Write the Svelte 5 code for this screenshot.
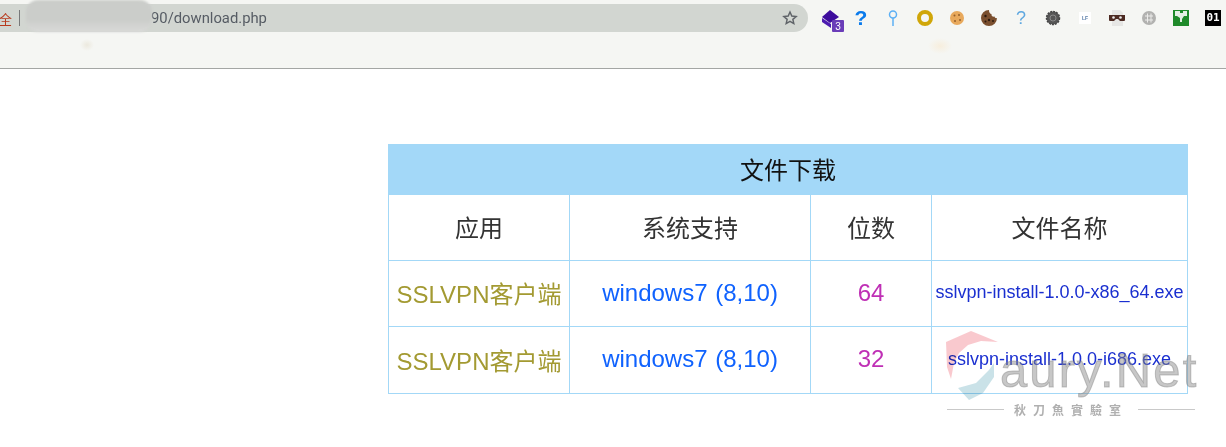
<script>
  const extensions = ["stack", "help", "pin", "ring", "cookie", "choc", "help2", "gear", "lf", "mask", "badge", "puzzle", "bin"];
  const rows = [
    { bits: "64", file: "sslvpn-install-1.0.0-x86_64.exe" },
    { bits: "32", file: "sslvpn-install-1.0.0-i686.exe" }
  ];
</script>

<div class="toolbar">
  <div class="pill">
    <span class="secure">全</span>
    <span class="sep"></span>
    <span class="url">90/download.php</span>
    <svg class="star" width="16" height="16" viewBox="0 0 24 24" fill="none" stroke="#5f6368" stroke-width="2.2">
      <path d="M12 3l2.7 6 6.5.7-4.9 4.3 1.4 6.4L12 17.1l-5.700 3.300 1.400-6.400L2.800 9.700l6.500-.7z" />
    </svg>
  </div>

  <div class="icons">
    {#each extensions as name}
      <span class="ext">
        {#if name === "stack"}
          <svg width="32" height="32" viewBox="0 0 32 32">
            <path d="M17 8l9 7-9 6-8-6z" fill="#3d0c9c" />
            <path d="M9 16l9 6v4l-9-6z" fill="#4c1cb0" />
            <rect x="19" y="18" width="12" height="12" rx="1" fill="#6a3db8" />
            <text x="25" y="28" class="badge-num">3</text>
          </svg>
        {:else if name === "help"}
          <span class="q">?</span>
        {:else if name === "pin"}
          <svg width="12" height="18" viewBox="0 0 12 18" fill="none" stroke="#5cb0f5" stroke-width="1.500">
            <circle cx="6" cy="5.500" r="3.500" />
            <path d="M6 9v8" />
          </svg>
        {:else if name === "ring"}
          <svg width="18" height="18" viewBox="0 0 18 18" fill="none">
            <circle cx="9" cy="9" r="6" stroke="#d0a608" stroke-width="4" />
          </svg>
        {:else if name === "cookie"}
          <svg width="16" height="16" viewBox="0 0 16 16">
            <circle cx="8" cy="8" r="7" fill="#e8a95c" />
            <circle cx="5.500" cy="5.500" r="1" fill="#96602a" />
            <circle cx="10" cy="5" r="1" fill="#96602a" />
            <circle cx="11" cy="10" r="1" fill="#96602a" />
            <circle cx="6" cy="11" r="1" fill="#96602a" />
          </svg>
        {:else if name === "choc"}
          <svg width="18" height="18" viewBox="0 0 18 18">
            <path d="M9 1a8 8 0 1 0 8 8c-1.500.5-2.500-.5-2.500-1.500C13 8 11 7 11.500 5 10 5 8.800 3 9 1z" fill="#7a4f2e" />
            <circle cx="5.500" cy="7" r="1.200" fill="#2e1a0e" />
            <circle cx="9" cy="11" r="1.200" fill="#2e1a0e" />
            <circle cx="5.500" cy="12.500" r="1" fill="#2e1a0e" />
            <circle cx="13" cy="12" r="1" fill="#2e1a0e" />
          </svg>
        {:else if name === "help2"}
          <span class="q light">?</span>
        {:else if name === "gear"}
          <svg width="16" height="16" viewBox="0 0 16 16">
            <circle cx="8" cy="8" r="6.500" fill="#565656" stroke="#444" stroke-width="1.500" stroke-dasharray="2 1" />
            <circle cx="8" cy="8" r="3" fill="none" stroke="#8a8a8a" />
          </svg>
        {:else if name === "lf"}
          <span class="lf">LF</span>
        {:else if name === "mask"}
          <svg width="18" height="18" viewBox="0 0 18 18">
            <path d="M4 1h8l3 3v13H4z" fill="#e6e6e4" />
            <path d="M1 6h16v5a1 1 0 0 1-1 1h-4l-2-2H8l-2 2H2a1 1 0 0 1-1-1z" fill="#4c2a22" />
            <circle cx="5.500" cy="8.500" r="1.300" fill="#eee" />
            <circle cx="12.500" cy="8.500" r="1.300" fill="#eee" />
          </svg>
        {:else if name === "badge"}
          <svg width="16" height="16" viewBox="0 0 16 16" fill="none">
            <circle cx="8" cy="8" r="7" fill="#b2b2b0" />
            <path d="M4 6h8M4 10h8M6.500 3.500v9M10 3.500v9" stroke="#ececea" stroke-width="1" />
          </svg>
        {:else if name === "puzzle"}
          <svg width="16" height="16" viewBox="0 0 16 16">
            <rect width="16" height="16" fill="#1f8a2a" />
            <path d="M2 1h5v2h3V1h4v5h-3l-2 3v3H7V8L4 6H2z" fill="#e4efe4" />
          </svg>
        {:else}
          <span class="bin">01</span>
        {/if}
      </span>
    {/each}
  </div>
</div>

<div class="page">
  <table>
    <colgroup>
      <col class="c1" />
      <col class="c2" />
      <col class="c3" />
      <col class="c4" />
    </colgroup>
    <thead>
      <tr class="title"><th colspan="4">文件下载</th></tr>
      <tr class="heads">
        <th>应用</th>
        <th>系统支持</th>
        <th>位数</th>
        <th>文件名称</th>
      </tr>
    </thead>
    <tbody>
      {#each rows as row}
        <tr>
          <td class="app">SSLVPN客户端</td>
          <td class="os">windows7 (8,10)</td>
          <td class="bits">{row.bits}</td>
          <td class="file">{row.file}</td>
        </tr>
      {/each}
    </tbody>
  </table>
</div>

<!-- blurred-out host in the address bar -->
<div class="blur"></div>

<!-- site watermark stamped over the screenshot -->
<div class="mark">
  <svg class="shield" width="60" height="72" viewBox="-2 0 60 72">
    <path d="M-1 11L24 0l27 11-17-1-13 4-9 8-5 10-3 16-4-12z" fill="#f8c3c9" opacity=".9" />
    <path d="M47 32v14L36 62l-14 7-11-12 18-5 13-13z" fill="#c4dfe6" opacity=".9" />
  </svg>
  <span class="brand">aury.Net</span>
  <div class="tag">
    <span class="rule"></span>
    <span class="cn">秋刀魚實驗室</span>
    <span class="rule"></span>
  </div>
</div>

<style>
  :global(body) {
    margin: 0;
    background: #fff;
    overflow: hidden;
  }

  .toolbar {
    box-sizing: border-box;
    height: 69px;
    padding-top: 4px;
    border-bottom: 1px solid #a4a6a4;
    background:
      radial-gradient(ellipse 7px 6px at 87px 45px, #ece9de, transparent),
      radial-gradient(ellipse 12px 8px at 940px 46px, #f7eedd, transparent),
      #f5f6f3;
    display: flex;
    align-items: flex-start;
  }

  .pill {
    width: 808px;
    height: 28px;
    flex: none;
    box-sizing: border-box;
    background: #d2d6d1;
    border-radius: 0 14px 14px 0;
    display: flex;
    align-items: center;
    padding-right: 10px;
    font: 14.8px "Roboto", "Noto Sans CJK SC", sans-serif;
  }

  .secure {
    color: #b8391c;
    font: 13px "Noto Sans CJK SC", sans-serif;
    margin-left: -1px;
    width: 14px;
  }

  .sep {
    width: 1px;
    height: 16px;
    background: #77797a;
    margin-left: 6px;
  }

  .url {
    color: #565c64;
    margin-left: 131px;
    flex: 1;
  }

  .star {
    flex: none;
  }

  .icons {
    display: flex;
    margin-left: 5px;
  }

  .ext {
    width: 32px;
    height: 28px;
    display: flex;
    align-items: center;
    justify-content: center;
  }

  .badge-num {
    font: 10px "Liberation Sans", sans-serif;
    fill: #fff;
    text-anchor: middle;
  }

  .q {
    font: bold 21px "Liberation Sans", sans-serif;
    color: #0a7bec;
  }

  .q.light {
    font-size: 18px;
    font-weight: normal;
    color: #5fa8e0;
  }

  .lf {
    width: 12px;
    height: 12px;
    background: #fff;
    color: #5a7fa8;
    font: bold 5px/12px "Liberation Sans", sans-serif;
    text-align: center;
  }

  .bin {
    width: 16px;
    height: 16px;
    background: #000;
    color: #fff;
    font: bold 11px/16px "DejaVu Sans Mono", monospace;
    text-align: center;
  }

  .page {
    padding: 75px 0 0 388px;
  }

  table {
    border-collapse: collapse;
    table-layout: fixed;
    width: 799px;
    font-family: "Liberation Sans", "Noto Sans CJK SC", sans-serif;
    text-align: center;
  }

  .c1 { width: 181px; }
  .c2 { width: 241px; }
  .c3 { width: 121px; }
  .c4 { width: 256px; }

  th, td {
    box-sizing: border-box;
    border: 1px solid #a3d8f7;
    padding: 0 0 2px;
    font-weight: normal;
  }

  .title th {
    height: 50px;
    background: #a3d8f8;
    color: #111;
    font-size: 24px;
  }

  .heads th {
    height: 66px;
    color: #333;
    font-size: 24px;
  }

  tbody td {
    height: 66px;
    font-size: 24px;
  }

  tbody tr:last-child td {
    height: 67px;
  }

  .app {
    color: #a39a32;
  }

  .os {
    color: #0f62fe;
    word-spacing: 1px;
  }

  .bits {
    color: #bf2fb5;
  }

  tbody td.file {
    color: #1a2fd0;
    font-size: 18px;
  }

  .blur {
    position: absolute;
    left: 26px;
    top: 0;
    width: 126px;
    height: 32px;
    border-radius: 12px;
    background: linear-gradient(#cbcdca 60%, #d9dad8);
    filter: blur(1px);
  }

  .mark {
    position: absolute;
    left: 947px;
    top: 331px;
    width: 248px;
    height: 86px;
    pointer-events: none;
  }

  .shield {
    position: absolute;
    left: -2px;
    top: 0;
    mix-blend-mode: multiply;
  }

  .brand {
    position: absolute;
    left: 53px;
    top: 11px;
    font: 49px/56px "Liberation Sans", sans-serif;
    letter-spacing: 2.1px;
    -webkit-text-stroke: 1px rgba(130, 130, 130, 0.45);
    color: rgba(130, 130, 130, 0.45);
    white-space: nowrap;
  }

  .tag {
    position: absolute;
    left: 0;
    right: 0;
    top: 70px;
    display: flex;
    align-items: center;
    gap: 10px;
  }

  .rule {
    flex: 1;
    height: 1px;
    background: #c9c9c9;
  }

  .cn {
    font: bold 12px "Noto Sans CJK TC", sans-serif;
    letter-spacing: 7px;
    color: #b0b0b0;
    white-space: nowrap;
  }
</style>
